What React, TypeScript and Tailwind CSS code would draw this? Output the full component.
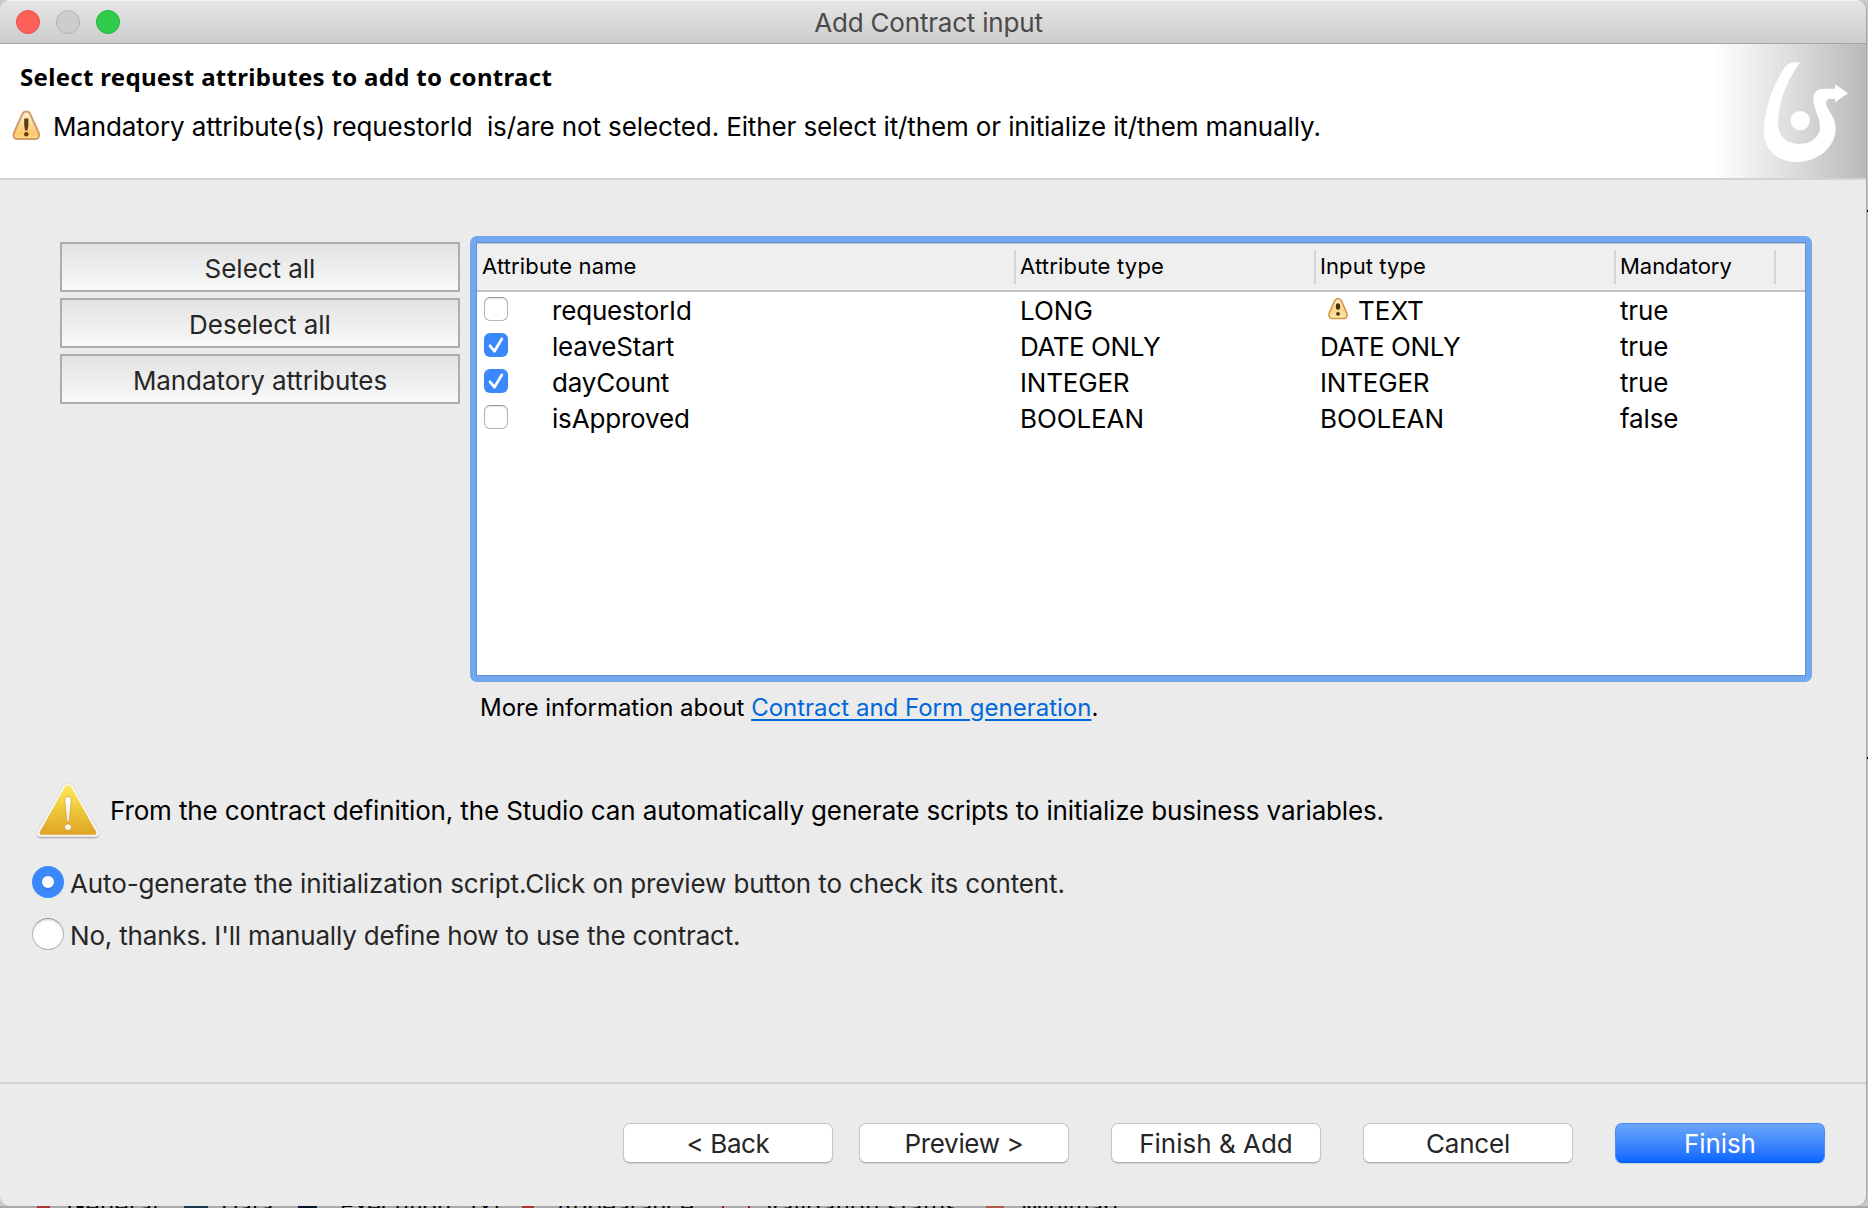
import React from "react";

type Row = {
  name: string;
  checked: boolean;
  type: string;
  input: string;
  tracking: string;
  warn?: boolean;
  mandatory: string;
};

const rows: Row[] = [
  { name: "requestorId", checked: false, type: "LONG", input: "TEXT", tracking: "tracking-[0px]", warn: true, mandatory: "true" },
  { name: "leaveStart", checked: true, type: "DATE ONLY", input: "DATE ONLY", tracking: "tracking-[-0.45px]", mandatory: "true" },
  { name: "dayCount", checked: true, type: "INTEGER", input: "INTEGER", tracking: "tracking-[-0.2px]", mandatory: "true" },
  { name: "isApproved", checked: false, type: "BOOLEAN", input: "BOOLEAN", tracking: "tracking-[-0.1px]", mandatory: "false" },
];

function MessageWarningIcon() {
  return (
    <svg className="block h-[31px] w-[29px]" viewBox="0 0 29 31">
      <defs>
        <linearGradient id="msgWarn" x1="0" y1="0" x2="0" y2="1">
          <stop offset="0" stopColor="#fdf3dc" />
          <stop offset="0.55" stopColor="#fbd591" />
          <stop offset="0.8" stopColor="#fdc76a" />
          <stop offset="1" stopColor="#fedd94" />
        </linearGradient>
      </defs>
      <path
        d="M14.3 1.6c2 0 3.2 1.100 4 2.800l8 17.400c.5 1.200.9 2.400.8 3.700-.2 2.300-1.500 3.500-3.800 3.500H5.300C3 29 1.700 27.800 1.500 25.500c-.1-1.300.3-2.500.8-3.700l8-17.400c.8-1.700 2-2.800 4-2.800z"
        fill="url(#msgWarn)"
        stroke="#cf9c66"
        strokeWidth="2"
      />
      <path d="M12.200 8.500h4.200v7l-1 5h-2.200l-1-5z" fill="#5c3b0c" />
      <circle cx="14.300" cy="24.300" r="2.200" fill="#5c3b0c" />
    </svg>
  );
}

function CellWarningIcon() {
  return (
    <svg className="block h-[23px] w-[20px]" viewBox="0 0 20 23">
      <defs>
        <linearGradient id="cellWarn" x1="0" y1="0" x2="0" y2="1">
          <stop offset="0" stopColor="#fdf0cf" />
          <stop offset="0.6" stopColor="#fad98f" />
          <stop offset="1" stopColor="#fde6a8" />
        </linearGradient>
      </defs>
      <path
        d="M10 1.500c1.700 0 2.600.9 3.300 2.300l5.200 11.700c.9 2.300.8 6-2.500 6H4c-3.300 0-3.400-3.700-2.500-6L6.700 3.800C7.400 2.400 8.300 1.500 10 1.500z"
        fill="url(#cellWarn)"
        stroke="#d29447"
        strokeWidth="1.600"
      />
      <ellipse cx="10" cy="9.500" rx="2.200" ry="3.200" fill="#4a2f08" />
      <circle cx="10" cy="16.800" r="1.900" fill="#4a2f08" />
    </svg>
  );
}

function CautionIcon() {
  return (
    <svg className="block h-[58px] w-[64px]" viewBox="2 0 60 57" preserveAspectRatio="none">
      <defs>
        <linearGradient id="caution" x1="0" y1="0" x2="0" y2="1">
          <stop offset="0" stopColor="#fee95c" />
          <stop offset="0.45" stopColor="#f0cb3c" />
          <stop offset="1" stopColor="#dfa323" />
        </linearGradient>
        <linearGradient id="cautionMark" x1="0" y1="0" x2="0" y2="1">
          <stop offset="0" stopColor="#ffffff" />
          <stop offset="1" stopColor="#f3ead0" />
        </linearGradient>
      </defs>
      <path
        d="M32 2.500c2.500 0 4 1.300 5.200 3.500l23.300 43c1.700 3.500.4 6.500-3.500 6.500H7c-3.900 0-5.200-3-3.500-6.500L26.800 6C28 3.800 29.500 2.500 32 2.500z"
        fill="#8f8f8f"
        opacity="0.600"
      />
      <path
        d="M32 1c2.500 0 4 1.300 5.200 3.500l23.300 43c1.700 3.500.4 6.500-3.500 6.500H7c-3.900 0-5.200-3-3.500-6.500L26.800 4.500C28 2.300 29.500 1 32 1z"
        fill="#f6f5f1"
        stroke="#cfcfcb"
        strokeWidth="0.600"
      />
      <path
        d="M32 3.200c1.500 0 2.500.9 3.300 2.400l22.900 43c.9 2 .2 3.300-1.800 3.300H7.600c-2 0-2.700-1.300-1.800-3.300l22.900-43c.8-1.500 1.800-2.400 3.300-2.400z"
        fill="url(#caution)"
      />
      <path
        d="M32 14.500c2.100 0 3.100 1.300 3 3.400L33.400 37c-.1 1.200-.6 1.800-1.400 1.800s-1.300-.6-1.400-1.800L29 17.900c-.1-2.100.9-3.400 3-3.400z"
        fill="url(#cautionMark)"
        stroke="#b58a20"
        strokeWidth="0.500"
      />
      <circle cx="32" cy="44.500" r="3.200" fill="url(#cautionMark)" stroke="#b58a20" strokeWidth="0.500" />
    </svg>
  );
}

function BrandLogo() {
  return (
    <svg className="block h-[104px] w-[88px]" viewBox="366 180 264 312">
      <path
        fill="#fff"
        d="M481 187C445 235 414 305 414 370C414 410 440 432 478 432C515 432 540 410 540 382C540 350 520 328 520 297C520 275 532 266 553 266H585V253L624 280L585 307V297H570C560 297 557 304 559 315C564 335 587 350 587 385C587 440 535 486 470 486C412 486 372 448 372 398C372 320 405 245 433 205C443 190 452 186 481 187Z"
      />
      <circle cx="480.500" cy="362" r="29" fill="#fff" />
    </svg>
  );
}

function Checkbox({ checked }: { checked: boolean }) {
  if (!checked) {
    return (
      <span className="block size-6 rounded-[6px] border border-[#b4b4b4] border-t-[#9c9c9c] bg-white shadow-[inset_0_1px_1px_#e2e2e2]" />
    );
  }
  return (
    <span className="block size-6 rounded-[6px] bg-[#3b88fb]">
      <svg className="block size-6" viewBox="0 0 24 24" fill="none">
        <path d="M6 12.800l4.400 5.400L17.800 6" stroke="#fff" strokeWidth="2.700" strokeLinecap="round" strokeLinejoin="round" />
      </svg>
    </span>
  );
}

function Radio({ checked, tracking, children }: { checked: boolean; tracking: string; children: React.ReactNode }) {
  return (
    <div className="flex h-8 items-center">
      {checked ? (
        <span className="flex size-8 items-center justify-center rounded-full bg-[#3b88fb]">
          <span className="size-3 rounded-full bg-white shadow-[0_1px_1px_#2b6fd6]" />
        </span>
      ) : (
        <span className="size-8 rounded-full border border-[#b4b4b4] border-t-[#959595] bg-white shadow-[inset_0_2px_2px_#e6e6e6]" />
      )}
      <span className={"pl-[6px] pt-[3px] text-[26px] leading-8 whitespace-pre text-[#262626] " + tracking}>{children}</span>
    </div>
  );
}

function SideButton({ tracking, children }: { tracking: string; children: React.ReactNode }) {
  return (
    <button
      className={
        "h-[50px] w-[400px] border-2 border-[#adadad] bg-linear-to-b from-[#e2e2e2] to-[#f9f9f9] pt-[3px] text-center text-[26px] leading-[43px] text-[#262626] " +
        tracking
      }
    >
      {children}
    </button>
  );
}

function PushButton({ tracking, className = "", children }: { tracking: string; className?: string; children: React.ReactNode }) {
  return (
    <button
      className={
        "h-10 w-[210px] rounded-[7px] border border-[#c6c6c6] border-b-[#b0b0b0] bg-white pt-[2px] text-center text-[26px] leading-[36px] text-[#262626] shadow-[0_1px_1px_#d0d0d0] " +
        tracking +
        " " +
        className
      }
    >
      {children}
    </button>
  );
}

function ColumnHeader({ width, tracking, children }: { width: string; tracking: string; children: React.ReactNode }) {
  return (
    <div className={"flex h-full items-center " + width}>
      <span className={"grow pb-[2px] text-[22px] leading-[44px] " + tracking}>{children}</span>
      <span className="mb-px h-[34px] w-[2px] bg-[#d4d4d4]" />
    </div>
  );
}

export default function App() {
  return (
    <div className="relative h-[1208px] w-[1868px] overflow-hidden bg-[#c9c9c9] font-[Inter,sans-serif] text-black">
      {/* parts of the editor window visible behind the dialog */}
      <div className="absolute top-[210px] right-0 h-[2px] w-[2px] bg-black" />
      <div className="absolute top-[757px] right-0 h-[2px] w-[2px] bg-black" />
      <div className="absolute top-[1206px] left-0 h-[2px] w-full overflow-hidden bg-[#a9a9a9] text-[24px] leading-[24px] whitespace-pre">
        <span className="absolute -top-[11px] left-[67px] tracking-[0.5px]">General</span>
        <span className="absolute top-0 left-[37px] h-[2px] w-[13px] bg-[#a33]" />
        <span className="absolute top-0 left-[184px] h-[2px] w-[24px] bg-[#1b3548]" />
        <span className="absolute -top-[11px] left-[221px]">Data</span>
        <span className="absolute top-0 left-[298px] h-[2px] w-[19px] bg-[#04142a]" />
        <span className="absolute -top-[11px] left-[340px]">Execution</span>
        <span className="absolute -top-[11px] left-[470px]">(x)</span>
        <span className="absolute top-0 left-[522px] h-[2px] w-[12px] bg-[#a33]" />
        <span className="absolute -top-[11px] left-[556px]">Appearance</span>
        <span className="absolute top-0 left-[722px] h-[2px] w-[2px] bg-[#a11]" />
        <span className="absolute top-0 left-[748px] h-[2px] w-[2px] bg-[#a11]" />
        <span className="absolute -top-[11px] left-[764px] tracking-[0.5px]">Validation status</span>
        <span className="absolute top-0 left-[986px] h-[2px] w-[18px] bg-[#b0584e]" />
        <span className="absolute -top-[11px] left-[1021px]">Minimap</span>
      </div>

      <div className="relative flex h-[1206px] w-[1866px] flex-col overflow-hidden rounded-[10px] bg-[#ebebeb] shadow-[1px_0_0_0_#a6a6a6]">
        {/* title bar */}
        <div className="flex h-[44px] shrink-0 items-center border-t border-b border-t-[#f4f4f4] border-b-[#a3a3a3] bg-linear-to-b from-[#e6e6e6] to-[#cdcdcd]">
          <div className="flex w-[120px] gap-4 pl-4">
            <span className="size-6 rounded-full border border-[#e9514a] bg-[#fe605a]" />
            <span className="size-6 rounded-full border border-[#b2b2b2] bg-[#cdcdcd]" />
            <span className="size-6 rounded-full border border-[#1fb43a] bg-[#2fcd4b]" />
          </div>
          <div className="grow pt-px pr-[129px] text-center text-[26px] leading-[40px] tracking-[-0.2px] text-[#4a4a4a]">
            Add Contract input
          </div>
        </div>

        {/* wizard header */}
        <div className="flex h-[136px] shrink-0 justify-between border-b-2 border-[#d3d3d3] bg-white">
          <div className="flex flex-col">
            <h1 className="mt-[17px] h-[32px] pl-[20px] font-['Noto_Sans',sans-serif] text-[24px] leading-[32px] font-bold tracking-[0.313px]">
              Select request attributes to add to contract
            </h1>
            <div className="mt-[17px] flex items-start pl-[12px]">
              <MessageWarningIcon />
              <span className="pt-px pl-[12px] text-[26px] leading-[32px] tracking-[-0.124px] whitespace-pre">
                {"Mandatory attribute(s) requestorId  is/are not selected. Either select it/them or initialize it/them manually."}
              </span>
            </div>
          </div>
          <div className="w-[152px] bg-linear-to-r from-white via-[#dddedf] via-50% to-[#b8b9bb] pt-[16px] pl-[48px]">
            <BrandLogo />
          </div>
        </div>

        {/* attribute selection */}
        <div className="flex shrink-0 pt-[56px] pl-[60px]">
          <div className="flex flex-col gap-[6px] pt-[6px]">
            <SideButton tracking="tracking-[-0.04px]">Select all</SideButton>
            <SideButton tracking="tracking-[-0.03px]">Deselect all</SideButton>
            <SideButton tracking="tracking-[-0.084px]">Mandatory attributes</SideButton>
          </div>
          <div className="ml-[10px] h-[446px] w-[1342px] rounded-[7px] border-[6px] border-[#74a8ee] bg-[#74a8ee]">
            <div className="h-full w-full border border-[#5f93d8] bg-white">
              <div className="flex h-[49px] border-t border-b-2 border-t-[#c4c4c4] border-b-[#c4c4c4] bg-[#efefef] pl-[5px]">
                <ColumnHeader width="w-[534px]" tracking="tracking-[0.15px]">Attribute name</ColumnHeader>
                <ColumnHeader width="w-[300px] pl-[4px]" tracking="tracking-[0.2px]">Attribute type</ColumnHeader>
                <ColumnHeader width="w-[300px] pl-[4px]" tracking="tracking-[0.085px]">Input type</ColumnHeader>
                <ColumnHeader width="w-[160px] pl-[4px]" tracking="tracking-[-0.05px]">Mandatory</ColumnHeader>
              </div>
              {rows.map((row) => (
                <div key={row.name} className="flex h-9 pl-[7px] text-[26px] leading-9">
                  <div className="w-[68px] pt-[5px]">
                    <Checkbox checked={row.checked} />
                  </div>
                  <div className="w-[468px] pt-px tracking-[-0.18px]">{row.name}</div>
                  <div className={"w-[300px] pt-px " + row.tracking}>{row.type}</div>
                  <div className={"flex w-[300px] pt-px " + row.tracking}>
                    {row.warn && (
                      <span className="pt-[4px] pr-[10px] pl-[8px]">
                        <CellWarningIcon />
                      </span>
                    )}
                    {row.input}
                  </div>
                  <div className="pt-px tracking-[-0.15px]">{row.mandatory}</div>
                </div>
              ))}
            </div>
          </div>
        </div>
        <p className="mt-[10px] h-[32px] shrink-0 pl-[480px] text-[24px] leading-[32px] tracking-[-0.05px]">
          More information about{" "}
          <a className="tracking-[0px] text-[#0068da] underline decoration-2 underline-offset-[3px]" href="#generation">
            Contract and Form generation
          </a>
          .
        </p>

        {/* script generation */}
        <div className="mt-[58px] flex h-[58px] shrink-0 pl-[36px]">
          <CautionIcon />
          <span className="pt-[13px] pl-[10px] text-[26px] leading-[32px] tracking-[-0.14px]">
            From the contract definition, the Studio can automatically generate scripts to initialize business variables.
          </span>
        </div>
        <div className="mt-[26px] flex shrink-0 flex-col gap-5 pl-8">
          <Radio checked tracking="tracking-[-0.122px]">
            Auto-generate the initialization script.Click on preview button to check its content.
          </Radio>
          <Radio checked={false} tracking="tracking-[-0.19px]">
            No, thanks. I'll manually define how to use the contract.
          </Radio>
        </div>

        {/* wizard buttons */}
        <div className="mt-auto flex h-[124px] shrink-0 border-t-2 border-[#d4d4d4] pt-[39px] pl-[623px]">
          <PushButton tracking="tracking-[-0.396px]">{"< Back"}</PushButton>
          <PushButton tracking="tracking-[-0.35px]" className="ml-[26px]">{"Preview >"}</PushButton>
          <PushButton tracking="tracking-[0px]" className="ml-[42px]">{"Finish & Add"}</PushButton>
          <PushButton tracking="tracking-[-0.193px]" className="ml-[42px]">Cancel</PushButton>
          <button className="ml-[42px] h-10 w-[210px] rounded-[7px] border border-[#4a8df0] border-b-[#0561f5] bg-linear-to-b from-[#6ba5f9] to-[#0666ff] pt-[2px] text-center text-[26px] leading-[36px] tracking-[-0.1px] text-white shadow-[0_1px_1px_#c4cfe0]">
            Finish
          </button>
        </div>
      </div>
    </div>
  );
}
